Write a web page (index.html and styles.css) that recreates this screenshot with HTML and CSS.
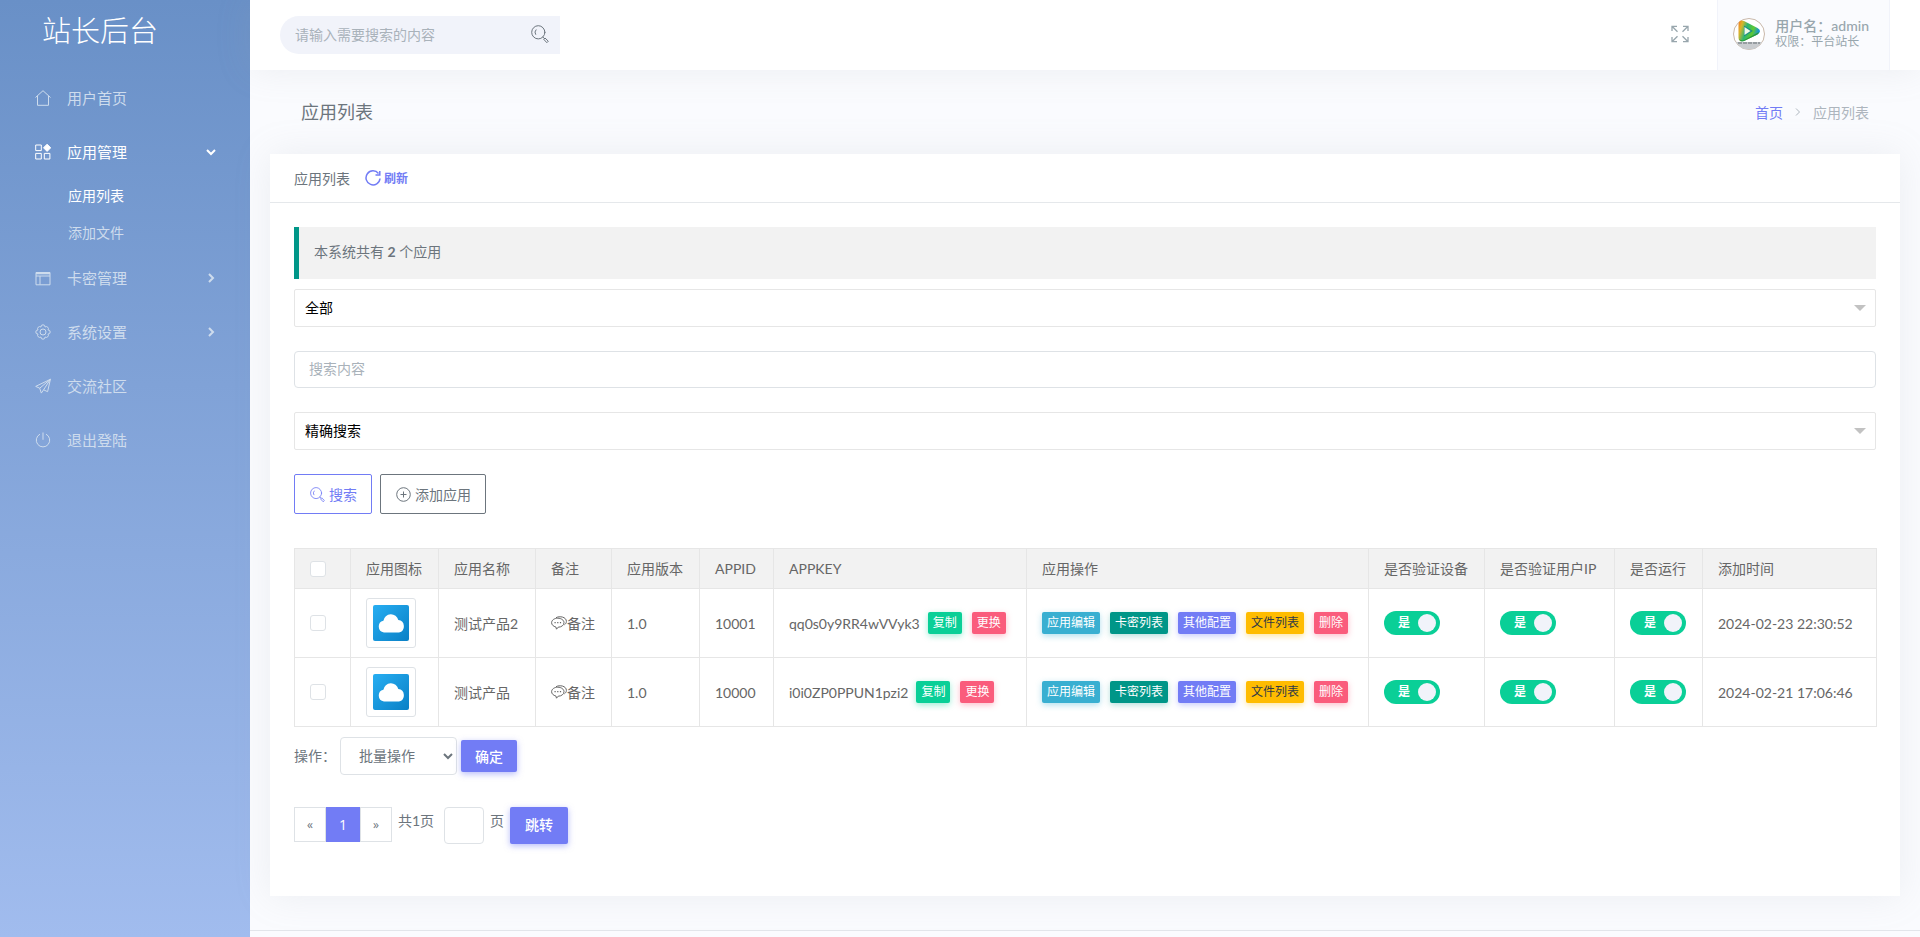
FILE: index.html
```html
<!DOCTYPE html>
<html lang="zh-CN">
<head>
<meta charset="utf-8">
<title>应用列表</title>
<link rel="stylesheet" href="styles.css">
</head>
<body>
<svg class="sprite" aria-hidden="true">
  <defs>
    <linearGradient id="sky" x1="0" y1="0" x2="1" y2="1"><stop offset="0" stop-color="#27aef2"/><stop offset="1" stop-color="#0a80c6"/></linearGradient>
    <symbol id="search" viewBox="0 0 18 18"><g fill="none" stroke="currentColor" stroke-linecap="round"><circle cx="7.3" cy="7.3" r="6.6"/><path d="M5 4.8a3.6 3.6 0 0 0-.4 4.6M12 12.2l1.3 1.2M13 14l1-1 3.3 3.2-1.2 1.2z"/></g></symbol>
    <symbol id="cloud" viewBox="0 0 36 36"><rect width="36" height="36" rx="2" fill="url(#sky)"/><path d="M11 27.500a6 6 0 0 1-.6-11.800 7.600 7.600 0 0 1 14.900-.6A6.300 6.300 0 0 1 26 27.500z" fill="#fff"/></symbol>
    <symbol id="chat" viewBox="0 0 16 14"><g fill="none" stroke="currentColor"><path d="M6.800 2.200c3.500 0 6.200 2 6.200 4.500s-2.600 4.500-5.800 4.500l-1.700 2-.6-2.200C2.300 10.400.6 8.700.6 6.700c0-2.500 2.700-4.500 6.200-4.500z"/><path d="M5 1.700C8.500-.3 15.400.800 15.400 5.500c0 1.300-.8 2.500-2 3.300"/><path d="M3.500 6.700h1.200M6.200 6.700h1.200M8.900 6.700h1.200" stroke-width="1.300"/></g></symbol>
  </defs>
</svg>
<div class="layout">
  <aside class="sidebar">
    <h1 class="brand">站长后台</h1>
    <nav>
      <ul class="menu">
        <li><a class="item" href="#"><svg class="ico" viewBox="0 0 16 16"><path d="M.5 7.500 8 .7l7.500 6.800M2.500 6v9.300h11V6"/></svg><span>用户首页</span></a></li>
        <li><a class="item active" href="#"><svg class="ico" viewBox="0 0 16 16"><path d="M.7 1h5.600v5.600H.7zM.7 9.400h5.600V15H.7zM9.300 9.400h5.600V15H9.300z"/><path d="M12.100.2 15.700 3.800 12.100 7.400 8.500 3.800z" fill="currentColor"/></svg><span>应用管理</span><svg class="arrow" viewBox="0 0 10 10"><path d="M1 3l4 4 4-4"/></svg></a>
          <ul class="submenu">
            <li><a class="active" href="#">应用列表</a></li>
            <li><a href="#">添加文件</a></li>
          </ul>
        </li>
        <li><a class="item" href="#"><svg class="ico" viewBox="0 0 16 16"><path d="M1 2.500h14v12.300H1zM1 6h14M5 6v8.500"/><path d="M1 3.300h14" stroke-width="2"/></svg><span>卡密管理</span><svg class="arrow" viewBox="0 0 10 10"><path d="M3 1l4 4-4 4"/></svg></a></li>
        <li><a class="item" href="#"><svg class="ico" viewBox="0 0 16 16"><path d="M5.900 3a2.100 2.200 0 0 1 4.200 0A2.100 2.200 45 0 1 13 5.900a2.100 2.200 90 0 1 0 4.200A2.100 2.200 135 0 1 10.100 13a2.100 2.200 0 0 1-4.200 0A2.100 2.200 45 0 1 3 10.100a2.100 2.200 90 0 1 0-4.200A2.100 2.200 135 0 1 5.900 3z"/><circle cx="8" cy="8" r="3"/></svg><span>系统设置</span><svg class="arrow" viewBox="0 0 10 10"><path d="M3 1l4 4-4 4"/></svg></a></li>
        <li><a class="item" href="#"><svg class="ico" viewBox="0 0 16 16"><path d="M15.400 1.300.7 8.400l4 1.800 1.600 4.900 2.300-3.300 4 1.900zM4.700 10.200l10.700-8.900-6.800 10.500"/></svg><span>交流社区</span></a></li>
        <li><a class="item" href="#"><svg class="ico" viewBox="0 0 16 16"><path d="M8 .5v7.300M5 2.200a6.700 6.700 0 1 0 6 0"/></svg><span>退出登陆</span></a></li>
      </ul>
    </nav>
  </aside>
  <div class="page">
    <header class="topbar">
      <form class="search">
        <input type="text" aria-label="搜索" placeholder="请输入需要搜索的内容">
        <button type="button" aria-label="搜索"><svg width="18" height="18"><use href="#search"/></svg></button>
      </form>
      <button class="full" type="button" aria-label="全屏"><svg width="18" height="18" viewBox="0 0 18 18" fill="none" stroke="currentColor" stroke-width="1.300"><path d="M1 6V1.300h5M1.500 1.800l5 5M12 1.300h5V6M16.500 1.800l-5 5M1 12v4.700h5M1.500 16.200l5-5M17 12v4.700h-5M16.500 16.200l-5-5"/></svg></button>
      <a class="user" href="#">
        <svg class="avatar" viewBox="0 0 32 32"><defs><linearGradient id="pl" x1="0" y1="0" x2="1" y2=".3"><stop offset="0" stop-color="#f5761f"/><stop offset=".2" stop-color="#d9b52a"/><stop offset=".45" stop-color="#2bb673"/><stop offset=".75" stop-color="#5fc932"/><stop offset="1" stop-color="#1795d2"/></linearGradient></defs><circle cx="16" cy="16" r="15.500" fill="#fff" stroke="#c9b8aa"/><path d="M3 24a15 15 0 0 0 26 0z" fill="#c9cccf"/><path d="M5.500 6Q6 1 11 3l13.500 7q5 3 0 6.500L11 23q-5 1.500-5.500-3z" fill="url(#pl)"/><path d="M10 22.500 26 14q-.5 2-2 2.800L11 23q-3.500 1-5-1.500z" fill="#2a9a3a"/><path d="M11 7.500v11l9-5.500z" fill="#1c8f86"/><path d="M11.500 9v8l6-4z" fill="#f0faea"/><path d="M5 25h22" stroke="#878d92" stroke-width="1.500" stroke-dasharray="4 1"/></svg>
        <span class="who"><strong>用户名：admin</strong><small>权限：平台站长</small></span>
      </a>
    </header>
    <main class="content">
      <div class="heading">
        <h2>应用列表</h2>
        <nav class="crumbs" aria-label="位置"><a href="#">首页</a><svg width="6" height="8" viewBox="0 0 6 8" fill="none" stroke="currentColor"><path d="M1 .5 4.500 4 1 7.500"/></svg><span>应用列表</span></nav>
      </div>
      <section class="card">
        <div class="card-head">应用列表
          <a class="refresh" href="#"><svg width="16" height="16" viewBox="0 0 16 16" fill="none" stroke="currentColor" stroke-width="1.500"><path d="M13.500 3.500A7 7 0 1 0 15 8.500"/><path d="M14.800 1v4h-4.300"/></svg>刷新</a>
        </div>
        <div class="card-body">
          <div class="notice">本系统共有 <b>2</b> 个应用</div>
          <form class="filters">
            <div class="pick"><select aria-label="应用范围"><option>全部</option></select></div>
            <input class="field" type="text" aria-label="搜索内容" placeholder="搜索内容">
            <div class="pick"><select aria-label="搜索方式"><option>精确搜索</option></select></div>
            <div class="actions">
              <button class="outline violet" type="button"><svg width="15" height="15"><use href="#search"/></svg>搜索</button>
              <button class="outline" type="button"><svg width="15" height="15" viewBox="0 0 15 15" fill="none" stroke="currentColor"><circle cx="7.500" cy="7.500" r="6.800"/><path d="M4.500 7.500h6M7.500 4.500v6"/></svg>添加应用</button>
            </div>
          </form>
          <table class="apps">
            <colgroup><col class="w56"><col class="w88"><col class="w97"><col class="w76"><col class="w88"><col class="w74"><col class="w253"><col class="w342"><col class="w116"><col class="w130"><col class="w88"><col class="w174"></colgroup>
            <thead><tr><th><input type="checkbox" aria-label="全选"></th><th>应用图标</th><th>应用名称</th><th>备注</th><th>应用版本</th><th>APPID</th><th>APPKEY</th><th>应用操作</th><th>是否验证设备</th><th>是否验证用户IP</th><th>是否运行</th><th>添加时间</th></tr></thead>
            <tbody>
              <tr>
                <td><input type="checkbox" aria-label="选择测试产品2"></td>
                <td><span class="thumb"><svg width="36" height="36"><use href="#cloud"/></svg></span></td>
                <td>测试产品2</td>
                <td><a class="note" href="#"><svg width="16" height="14"><use href="#chat"/></svg>备注</a></td>
                <td>1.0</td><td>10001</td>
                <td><div class="key">qq0s0y9RR4wVVyk3<div class="tags"><button class="tag green" type="button">复制</button><button class="tag red" type="button">更换</button></div></div></td>
                <td><div class="tags"><button class="tag blue" type="button">应用编辑</button><button class="tag teal" type="button">卡密列表</button><button class="tag violet" type="button">其他配置</button><button class="tag amber" type="button">文件列表</button><button class="tag red" type="button">删除</button></div></td>
                <td><label class="switch"><input type="checkbox" checked><span>是</span></label></td>
                <td><label class="switch"><input type="checkbox" checked><span>是</span></label></td>
                <td><label class="switch"><input type="checkbox" checked><span>是</span></label></td>
                <td>2024-02-23 22:30:52</td>
              </tr>
              <tr>
                <td><input type="checkbox" aria-label="选择测试产品"></td>
                <td><span class="thumb"><svg width="36" height="36"><use href="#cloud"/></svg></span></td>
                <td>测试产品</td>
                <td><a class="note" href="#"><svg width="16" height="14"><use href="#chat"/></svg>备注</a></td>
                <td>1.0</td><td>10000</td>
                <td><div class="key">i0i0ZP0PPUN1pzi2<div class="tags"><button class="tag green" type="button">复制</button><button class="tag red" type="button">更换</button></div></div></td>
                <td><div class="tags"><button class="tag blue" type="button">应用编辑</button><button class="tag teal" type="button">卡密列表</button><button class="tag violet" type="button">其他配置</button><button class="tag amber" type="button">文件列表</button><button class="tag red" type="button">删除</button></div></td>
                <td><label class="switch"><input type="checkbox" checked><span>是</span></label></td>
                <td><label class="switch"><input type="checkbox" checked><span>是</span></label></td>
                <td><label class="switch"><input type="checkbox" checked><span>是</span></label></td>
                <td>2024-02-21 17:06:46</td>
              </tr>
            </tbody>
          </table>
          <form class="batch">
            <label for="batch">操作：</label>
            <select id="batch"><option>批量操作</option></select>
            <button class="solid small" type="button">确定</button>
          </form>
          <form class="pager">
            <ul class="pages"><li><a href="#" aria-label="上一页">«</a></li><li><a class="current" href="#">1</a></li><li><a href="#" aria-label="下一页">»</a></li></ul>
            <span>共1页</span>
            <input id="goto" type="text" aria-label="页码">
            <label for="goto">页</label>
            <button class="solid" type="button">跳转</button>
          </form>
        </div>
      </section>
    </main>
    <footer class="footer"></footer>
  </div>
</div>
</body>
</html>
```
FILE: styles.css
```css
* { box-sizing: border-box; }
body {
  margin: 0;
  font: 14px/21px Lato, "Noto Sans CJK SC", sans-serif;
  color: #6c757d;
  background: #fafbfe;
}
input, select, button { font: inherit; color: inherit; margin: 0; }
button { cursor: pointer; }
a { color: inherit; text-decoration: none; }
ul { list-style: none; margin: 0; padding: 0; }
svg { display: block; flex: none; }
.sprite { position: absolute; width: 0; height: 0; }

.layout { display: flex; min-height: 100vh; }

/* sidebar */
.sidebar {
  flex: none;
  width: 250px;
  background: linear-gradient(#6990c7, #a1bcee);
  color: #cedced;
}
.brand {
  margin: 0;
  padding: 9px 42px 18px;
  font-size: 29px;
  line-height: 44px;
  font-weight: 300;
  color: #fff;
}
.item {
  display: flex;
  align-items: center;
  gap: 16px;
  height: 54px;
  padding: 0 34px 0 35px;
  font-size: 15px;
}
.ico, .arrow { fill: none; stroke: currentColor; }
.ico { width: 16px; height: 16px; }
.arrow { width: 10px; height: 10px; margin-left: auto; stroke-width: 2; }
.sidebar .active { color: #fff; }
.submenu { margin-top: -2px; }
.submenu a { display: block; padding: 8px 68px; }

/* top bar */
.page { flex: 1; min-width: 0; display: flex; flex-direction: column; }
.topbar {
  display: flex;
  align-items: center;
  height: 70px;
  padding: 0 30px;
  background: #fff;
  box-shadow: 0 0 35px 0 rgba(154, 161, 171, .15);
}
.search {
  display: flex;
  width: 280px;
  height: 38px;
  background: #f1f3fa;
  border-radius: 20px 0 0 20px;
}
.search input {
  flex: 1;
  min-width: 0;
  padding: 0 0 2px 15px;
  border: 0;
  background: none;
}
.search button { border: 0; padding: 0 11px 2px; background: none; }
::placeholder { color: #a9b2ba; opacity: 1; }
.full { margin-left: auto; padding: 0 28px 2px; border: 0; background: none; color: #98a6ad; }
.user {
  display: flex;
  align-items: center;
  gap: 10px;
  align-self: stretch;
  padding: 0 20px 2px 15px;
  border: 1px solid #f1f3fa;
  border-width: 0 1px;
  background: #fafbfe;
  color: #98a6ad;
}
.avatar { width: 32px; height: 32px; }
.who strong, .who small { display: block; line-height: 16px; }
.who small { font-size: 12px; }
.who strong { font-weight: 500; }

/* heading */
.content { flex: 1; padding: 0 20px 34px; }
.heading {
  display: flex;
  align-items: center;
  justify-content: space-between;
  height: 84px;
  padding: 0 31px;
}
.heading h2 { margin: 0; font-size: 18px; font-weight: 400; }
.crumbs { display: flex; align-items: center; gap: 12px; color: #adb5bd; }
.crumbs a, .refresh { color: #727cf5; }

/* card */
.card { background: #fff; box-shadow: 0 0 35px 0 rgba(154, 161, 171, .15); }
.card-head {
  display: flex;
  align-items: center;
  gap: 15px;
  height: 49px;
  padding: 0 24px;
  border-bottom: 1px solid #e5e8eb;
}
.refresh { display: flex; align-items: center; gap: 3px; font-size: 12px; font-weight: 700; }
.card-body { padding: 24px 24px 52px; }
.notice {
  padding: 14px 15px 16px;
  border-left: 5px solid #009688;
  background: #f2f2f2;
  line-height: 22px;
}
.filters { display: flex; flex-direction: column; gap: 24px; margin: 10px 0 34px; }
.pick { position: relative; }
.pick select {
  display: block;
  width: 100%;
  height: 38px;
  padding: 0 10px 2px;
  appearance: none;
  border: 1px solid #e6e6e6;
  border-radius: 2px;
  background: #fff;
  color: #000;
}
.pick::after {
  content: "";
  position: absolute;
  right: 10px;
  top: 16px;
  border: 6px solid transparent;
  border-top-color: #c2c2c2;
  border-bottom: 0;
}
.field { height: 37px; padding: 0 14px 2px; border: 1px solid #dee2e6; border-radius: 4px; }
.actions { display: flex; gap: 8px; }
.outline {
  display: flex;
  align-items: center;
  gap: 4px;
  height: 40px;
  padding: 0 14px 0 15px;
  border: 1px solid #6c757d;
  border-radius: 2px;
  background: #fff;
}
.outline.violet { color: #727cf5; border-color: #727cf5; }

/* table */
.apps { width: 100%; table-layout: fixed; border-collapse: collapse; color: #666; }
.apps th, .apps td { border: 1px solid #e6e6e6; padding: 0 0 0 15px; text-align: left; font-weight: 400; white-space: nowrap; }
.apps th { height: 40px; background: #f2f2f2; }
.apps td { height: 69px; }
.w56 { width: 56px; } .w74 { width: 74px; } .w76 { width: 76px; } .w88 { width: 88px; }
.w97 { width: 97px; } .w116 { width: 116px; } .w130 { width: 130px; } .w174 { width: 174px; }
.w253 { width: 253px; } .w342 { width: 342px; }
.apps th > input, .apps td > input {
  display: block;
  appearance: none;
  width: 16px;
  height: 16px;
  border: 1px solid #dee2e6;
  border-radius: 3px;
  background: #fff;
}
.thumb { display: block; width: 50px; padding: 6px; border: 1px solid #dee2e6; border-radius: 3px; }
.note { display: flex; align-items: center; }
.key { display: flex; align-items: center; gap: 8px; }
.tags { display: flex; gap: 10px; }
.tag {
  height: 22px;
  padding: 0 5px;
  border: 0;
  border-radius: 2px;
  font-size: 12px;
  line-height: 22px;
  color: #fff;
}
.tag.green { background: #0acf97; box-shadow: 0 2px 6px rgba(10, 207, 151, .4); }
.tag.red { background: #fa5c7c; box-shadow: 0 2px 6px rgba(250, 92, 124, .4); }
.tag.blue { background: #39afd1; box-shadow: 0 2px 6px rgba(57, 175, 209, .4); }
.tag.teal { background: #009688; box-shadow: 0 2px 6px rgba(0, 150, 136, .3); }
.tag.violet { background: #727cf5; box-shadow: 0 2px 6px rgba(114, 124, 245, .4); }
.tag.amber { background: #ffbc00; color: #313a46; box-shadow: 0 2px 6px rgba(255, 188, 0, .4); }
.switch { position: relative; display: block; width: 56px; height: 24px; }
.switch input { display: block; appearance: none; width: 56px; height: 24px; border-radius: 12px; background: #ced4da; }
.switch input:checked { background: #0acf97; }
.switch span { position: absolute; left: 14px; top: 0; font-size: 12px; line-height: 24px; font-weight: 700; color: #fff; }
.switch::after {
  content: "";
  position: absolute;
  right: 4px;
  top: 3px;
  width: 18px;
  height: 18px;
  border-radius: 50%;
  background: #f1f3fa;
}

/* below the table */
.batch { display: flex; align-items: center; gap: 4px; margin: 10px 0 32px; }
.batch label { padding-bottom: 2px; }
.batch select {
  width: 117px;
  height: 38px;
  padding: 0 0 2px 14px;
  border: 1px solid #dee2e6;
  border-radius: 4px;
  background: #fff;
}
.solid {
  height: 37px;
  padding: 0 15px 2px;
  border: 0;
  border-radius: 2px;
  background: #727cf5;
  color: #fff;
  font-weight: 500;
  box-shadow: 0 2px 6px rgba(114, 124, 245, .5);
}
.solid.small { height: 32px; padding: 0 14px; }
.pager { display: flex; align-items: flex-start; gap: 6px; }
.pager span, .pager label { padding-top: 3px; }
.pager input { width: 40px; height: 37px; margin-left: 4px; border: 1px solid #dee2e6; border-radius: 4px; }
.pages { display: flex; }
.pages a { display: block; padding: 0 12px; border: 1px solid #dee2e6; font-family: "Open Sans", sans-serif; font-size: 12px; line-height: 33px; }
.pages .current { border-color: #727cf5; background: #727cf5; color: #fff; font-size: 14px; }
.footer { height: 7px; border-top: 1px solid #e2e5ea; }
```
